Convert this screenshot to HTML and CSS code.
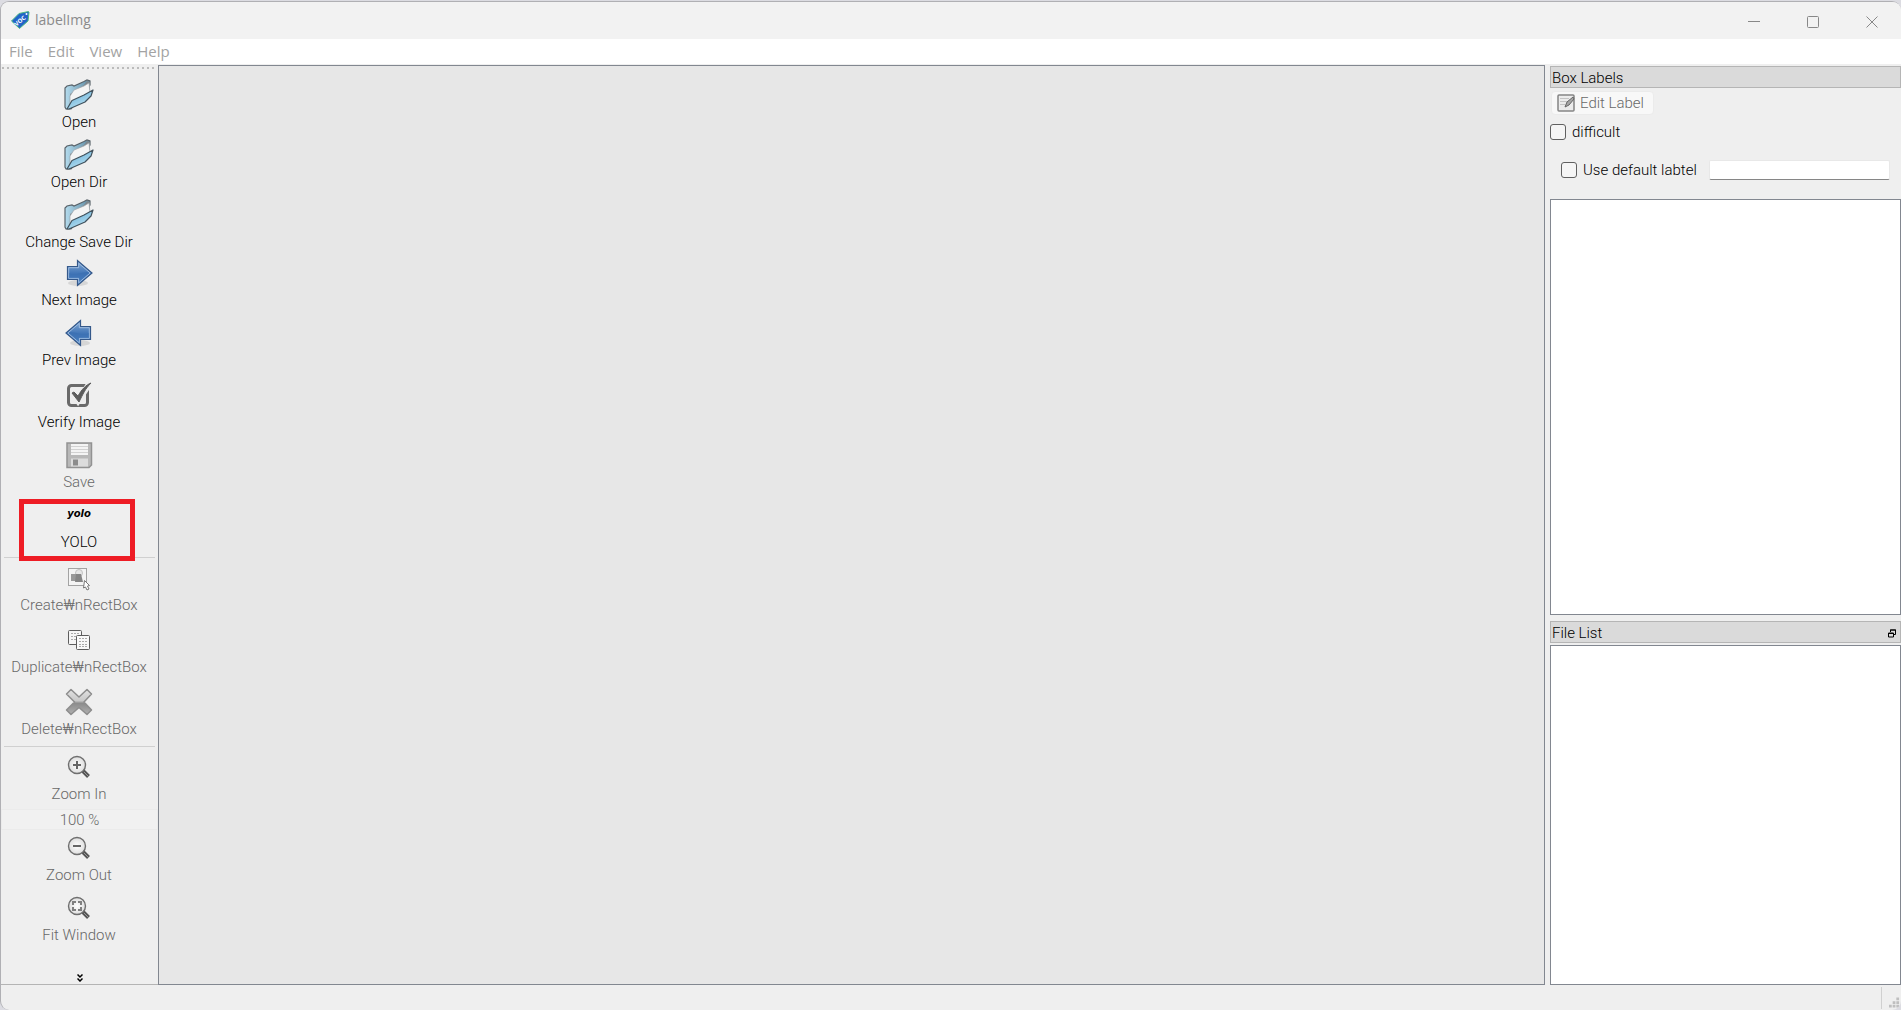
FILE: index.html
```html
<!DOCTYPE html>
<html lang="en">
<head>
    <meta charset="UTF-8">
    <meta name="viewport" content="width=device-width, initial-scale=1.0">
    <title>labelImg</title>
    <link rel="stylesheet" href="styles.css">
</head>
<body>
    <!-- shared icons -->
    <svg class="defs" width="0" height="0" aria-hidden="true">
        <defs>
            <linearGradient id="folderBlue" x1="0" y1="0" x2="0.6" y2="1">
                <stop offset="0" stop-color="#d3ecf8"/>
                <stop offset="0.5" stop-color="#8ac4e2"/>
                <stop offset="1" stop-color="#b9e2f4"/>
            </linearGradient>
            <linearGradient id="folderBack" x1="0" y1="0" x2="1" y2="0">
                <stop offset="0" stop-color="#b5dcee"/>
                <stop offset="1" stop-color="#5e8ba3"/>
            </linearGradient>
            <linearGradient id="arrowBlue" x1="0" y1="0" x2="0" y2="1">
                <stop offset="0" stop-color="#86abd6"/>
                <stop offset="0.5" stop-color="#4377b8"/>
                <stop offset="1" stop-color="#5b92d0"/>
            </linearGradient>
            <linearGradient id="crossGrey" x1="0" y1="0" x2="0" y2="1">
                <stop offset="0" stop-color="#e2e2e2"/>
                <stop offset="0.45" stop-color="#c8c8c8"/>
                <stop offset="0.55" stop-color="#8c8c8c"/>
                <stop offset="1" stop-color="#b0b0b0"/>
            </linearGradient>
            <radialGradient id="lens">
                <stop offset="0" stop-color="#ffffff"/>
                <stop offset="1" stop-color="#dedede"/>
            </radialGradient>
            <symbol id="folder" viewBox="0 0 32 32">
                <path d="M2 28V9l2-2 5-1 2 1 10-4.500 3-1.500 3 1v4L8 30H3z" fill="url(#folderBack)" stroke="#59636a" stroke-width="1.200"/>
                <path d="M7 15 21 6l3-4 3 1v8L8 24z" fill="#7d868c"/>
                <path d="M7 17 11 11l10-4 5-3 1 10L7 25z" fill="#f4f4f4" stroke="#9da5aa" stroke-width="0.700"/>
                <path d="M4 30 9 21.500l12-5.500 9-5-2 6-6 6-16 7z" fill="url(#folderBlue)" stroke="#41525d" stroke-width="1.200" stroke-linejoin="round"/>
            </symbol>
            <symbol id="arrow" viewBox="0 0 32 32">
                <ellipse cx="15" cy="26" rx="10" ry="3" fill="#d6d6d6"/>
                <path d="M4.500 9.500h10v-6L29 16 14.500 28.500v-6h-10z" fill="url(#arrowBlue)" stroke="#34588a" stroke-width="1.200"/>
                <path d="M5.700 10.700h10V6.300L27.200 16 15.700 25.700v-4.400h-10z" fill="none" stroke="#a5c1e2" stroke-width="0.900"/>
                <path d="M6 16c5 2 9 0 19-1l1 1-10 9v-4H6z" fill="#3469ad" opacity="0.450"/>
            </symbol>
            <symbol id="glass" viewBox="0 0 24 24">
                <path d="m15 15 6.500 6.500" stroke="#555" stroke-width="4"/>
                <path d="m17 17 4 4" stroke="#999" stroke-width="1"/>
                <circle cx="10" cy="10" r="8.500" fill="url(#lens)" stroke="#6f6f6f" stroke-width="1.400"/>
            </symbol>
        </defs>
    </svg>

    <div class="window">
        <header class="title-bar">
            <svg class="logo" viewBox="0 0 20 20" aria-hidden="true">
                <path d="M1.500 11 9 3.500 18.500 1.500l.500 1-1 8.500-8.500 7.500z" fill="#2265c8" stroke="#4fba82"/>
                <circle cx="16.500" cy="4" r="1" fill="#fff"/>
                <text class="logo-text" x="10" y="13" text-anchor="middle" transform="rotate(-40 10 11)">VOC</text>
            </svg>
            <h1>labelImg</h1>
            <div class="window-buttons">
                <button type="button" aria-label="Minimize">
                    <svg viewBox="0 0 12 12"><path d="M0 5.500h12"/></svg>
                </button>
                <button type="button" aria-label="Maximize">
                    <svg viewBox="0 0 12 12"><rect x="0.500" y="0.500" width="11" height="11" rx="1"/></svg>
                </button>
                <button type="button" aria-label="Close">
                    <svg viewBox="0 0 12 12"><path d="m.500.500 11 11m0-11-11 11"/></svg>
                </button>
            </div>
        </header>

        <nav class="menu-bar">
            <a href="#">File</a>
            <a href="#">Edit</a>
            <a href="#">View</a>
            <a href="#">Help</a>
        </nav>

        <main class="workspace">
            <div class="toolbar">
                <div class="handle"></div>
                <div class="tools">
                    <button type="button" class="tool"><svg class="icon"><use href="#folder"/></svg>Open</button>
                    <button type="button" class="tool"><svg class="icon"><use href="#folder"/></svg>Open Dir</button>
                    <button type="button" class="tool"><svg class="icon"><use href="#folder"/></svg>Change Save Dir</button>
                </div>
                <div class="tools nav">
                    <button type="button" class="tool"><svg class="icon"><use href="#arrow"/></svg>Next Image</button>
                    <button type="button" class="tool"><svg class="icon flip"><use href="#arrow"/></svg>Prev Image</button>
                </div>
                <div class="tools">
                    <button type="button" class="tool">
                        <svg class="icon" viewBox="0 0 32 32">
                            <rect x="5.500" y="6.500" width="19" height="20" rx="3" fill="#ededed" stroke="#6a6a6a" stroke-width="3"/>
                            <path d="m10 15 5 7L27 4" fill="none" stroke="#ededed" stroke-width="6"/>
                            <path d="m9 14 2-1 4 4C19 10 23 6 28 4c-6 6-8 11-12 19z" fill="#5c5c5c" stroke="#5c5c5c"/>
                        </svg>
                        Verify Image
                    </button>
                    <button type="button" class="tool" disabled>
                        <svg class="icon" viewBox="0 0 32 32">
                            <path d="M4 4h24.500v22l-2.500 2.500H4z" fill="#b8b8b8" stroke="#929292" stroke-width="1.500"/>
                            <path d="M8 5h17v11H8z" fill="#f4f4f4"/>
                            <path d="M8 7.500h17M8 10.500h17M8 13.500h17" stroke="#d2d2d2"/>
                            <path d="M8 19.500h17v8H8z" fill="#dcdcdc"/>
                            <path d="M10 20.500h5v6h-5z" fill="#8c8c8c"/>
                        </svg>
                        Save
                    </button>
                    <button type="button" class="tool marked"><span class="icon format">yolo</span>YOLO</button>
                </div>
                <div class="tools spaced">
                    <button type="button" class="tool" disabled>
                        <svg class="icon" viewBox="0 0 32 32">
                            <rect x="5.500" y="6.500" width="18" height="17" fill="#f4f4f4" stroke="#555" stroke-dasharray="1 1"/>
                            <circle cx="16" cy="11" r="3.500" fill="#e6e6e6" stroke="#c2c2c2"/>
                            <path d="M8 12h7v7H8z" fill="#999"/>
                            <path d="M13 12h5l2 8h-8z" fill="#858585"/>
                            <path d="m21.500 18.500 5 5-2 .500 1.500 3-2 1-1.500-3-2 1z" fill="#fff" stroke="#777"/>
                        </svg>
                        Create₩nRectBox
                    </button>
                    <button type="button" class="tool" disabled>
                        <svg class="icon" viewBox="0 0 32 32">
                            <rect x="5.500" y="6.500" width="13" height="14" rx="1" fill="#f5f5f5" stroke="#5d5d5d"/>
                            <path d="M8 9.500h8M8 12.500h8M8 15.500h8" stroke="#aaa" stroke-dasharray="2 1"/>
                            <rect x="13.500" y="11.500" width="13" height="14" rx="1" fill="#f9f9f9" stroke="#5d5d5d"/>
                            <path d="M16 14.500h8M16 17.500h8M16 20.500h8M16 22.500h8" stroke="#aaa" stroke-dasharray="2 1"/>
                        </svg>
                        Duplicate₩nRectBox
                    </button>
                    <button type="button" class="tool" disabled>
                        <svg class="icon" viewBox="0 0 32 32">
                            <path d="m8 3.500 8 7.500 8-7.500 4.500 4.500-7.500 8 7.500 8-4.500 4.500-8-7-8 7L3.500 24l8-8-8-8z" fill="url(#crossGrey)" stroke="#8d8d8d" stroke-width="1.500" stroke-linejoin="round"/>
                        </svg>
                        Delete₩nRectBox
                    </button>
                </div>
                <div class="tools zoom">
                    <button type="button" class="tool" disabled>
                        <svg class="icon small" viewBox="0 0 24 24"><use href="#glass"/><path d="M6 10h8M10 6v8" stroke="#666" stroke-width="2"/></svg>
                        Zoom In
                    </button>
                    <input class="zoom-value" type="text" value="100 %" aria-label="Zoom level" disabled>
                    <button type="button" class="tool" disabled>
                        <svg class="icon small" viewBox="0 0 24 24"><use href="#glass"/><path d="M6 10h8" stroke="#666" stroke-width="2"/></svg>
                        Zoom Out
                    </button>
                    <button type="button" class="tool" disabled>
                        <svg class="icon small" viewBox="0 0 24 24"><use href="#glass"/><path d="M6 9V6h3m2 0h3v3m0 2v3h-3m-2 0H6v-3" fill="none" stroke="#808080" stroke-width="2"/></svg>
                        Fit Window
                    </button>
                </div>
                <button type="button" class="more" aria-label="More tools">
                    <svg viewBox="0 0 6 8"><path d="m.500.500 2.500 2.500L5.500.500m-5 4L3 7l2.500-2.500"/></svg>
                </button>
            </div>

            <section class="canvas" aria-label="Image canvas"></section>

            <aside class="docks">
                <section class="dock labels">
                    <h2 class="dock-title">Box Labels</h2>
                    <button type="button" class="edit-label" disabled>
                        <svg viewBox="0 0 18 18">
                            <rect x="1" y="1" width="16" height="16" rx="1" fill="#ececec" stroke="#858585" stroke-width="1.500"/>
                            <path d="M3 4.500h9M3 7.500h7M3 10.500h5" stroke="#c4c4c4"/>
                            <path d="m8 13 2-5 6-5 1 2-5 6z" fill="#a5a5a5" stroke="#666"/>
                        </svg>
                        Edit Label
                    </button>
                    <label class="check"><input type="checkbox">difficult</label>
                    <div class="default-label">
                        <label class="check"><input type="checkbox">Use default labtel</label>
                        <input class="label-name" type="text" aria-label="Default label">
                    </div>
                    <div class="list"></div>
                </section>
                <section class="dock files">
                    <h2 class="dock-title">File List
                        <button type="button" class="float" aria-label="Float">
                            <svg viewBox="0 0 8 9"><path d="M2.500 3V1h5v4.500H6M2 1h6M.500 4h5v4h-5zM0 4.500h6"/></svg>
                        </button>
                    </h2>
                    <div class="list"></div>
                </section>
            </aside>
        </main>

        <footer class="status-bar">
            <svg class="grip" viewBox="0 0 12 12"><path d="M8 0h3v3H8zM4 4h3v3H4zM8 4h3v3H8zM0 8h3v3H0zM4 8h3v3H4zM8 8h3v3H8z"/></svg>
        </footer>
    </div>
</body>
</html>
```
FILE: styles.css
```css
* {
    box-sizing: border-box;
}
body {
    margin: 0;
    height: 100vh;
    padding-top: 1px;
    background-color: #dcdce2;
    font-family: Roboto, "Liberation Sans", Arial, sans-serif;
    font-size: 15px;
    font-weight: 300;
    line-height: 20px;
    color: #000;
}
h1, h2 {
    margin: 0;
    font-size: 15px;
    font-weight: inherit;
}
button {
    border: none;
    padding: 0;
    background: none;
    font: inherit;
    color: inherit;
}
button:disabled {
    color: #686868;
}
.defs {
    position: absolute;
}
.window {
    display: flex;
    flex-direction: column;
    height: 100%;
    background-color: #efefef;
    border: 1px solid #b0b0b4;
    border-width: 1px 0 0 1px;
    border-radius: 9px;
    overflow: hidden;
}

/* title bar and menu */
.title-bar {
    display: flex;
    align-items: center;
    height: 37px;
    padding: 0 0 1px 9px;
    gap: 5px;
    background-color: #f2f2f2;
    font-family: "Open Sans", "Noto Sans", sans-serif;
    font-weight: 400;
    color: #8b8b8b;
}
.title-bar h1 {
    font-size: 14px;
}
.logo {
    width: 20px;
    height: 20px;
}
.logo-text {
    fill: #fff;
    font-size: 6px;
    font-weight: bold;
}
.window-buttons {
    display: flex;
    margin-left: auto;
}
.window-buttons button {
    width: 59px;
    height: 35px;
}
.window-buttons svg {
    width: 12px;
    height: 12px;
    fill: none;
    stroke: #888;
    vertical-align: middle;
}
.menu-bar {
    display: flex;
    align-items: center;
    gap: 15px;
    height: 25px;
    padding: 0 0 2px 8px;
    background-color: #fff;
    font-family: "Open Sans", "Noto Sans", sans-serif;
    font-weight: 400;
}
.menu-bar a {
    color: #a3a3a3;
    text-decoration: none;
}

/* main area */
.workspace {
    display: flex;
    flex: 1;
    min-height: 0;
    padding-top: 1px;
}
.toolbar {
    display: flex;
    flex-direction: column;
    width: 157px;
    border-bottom: 1px solid #b4b4b4;
}
.handle {
    height: 2px;
    margin: 2px 1px 8px;
    background: repeating-linear-gradient(90deg, #bbb 0 2px, transparent 2px 5px);
}
.tools {
    display: flex;
    flex-direction: column;
}
.tools.nav {
    margin: -2px 0 2px;
}
.tools.spaced {
    gap: 2px;
    padding-bottom: 2px;
}
.tools.spaced::before,
.tools.zoom::before {
    content: "";
    height: 1px;
    margin: 0 3px;
    background-color: #d0d0d0;
}
.tools.zoom::before {
    margin-bottom: 2px;
}
.tool {
    position: relative;
    display: flex;
    flex-direction: column;
    align-items: center;
    gap: 1px;
    height: 60px;
    padding: 2px 1px 0 0;
    white-space: nowrap;
}
.icon {
    flex: none;
    width: 32px;
    height: 32px;
}
.icon.small {
    width: 24px;
    height: 24px;
    margin: 4px;
}
.icon.flip {
    transform: scaleX(-1);
}
.icon.format {
    font: italic bold 10px/30px "DejaVu Sans", sans-serif;
    text-align: center;
}
.marked::after {
    content: "";
    position: absolute;
    top: 2px;
    right: 23px;
    bottom: -4px;
    left: 18px;
    z-index: 1;
    border: 5px solid #ee1c25;
}
.zoom-value {
    height: 21px;
    padding: 0;
    border: 1px solid #ebebeb;
    background-color: #f1f1f1;
    font: inherit;
    text-align: center;
    color: #686868;
}
.more {
    margin-top: auto;
    height: 14px;
    line-height: 10px;
}
.more svg {
    width: 6px;
    height: 8px;
    fill: none;
    stroke: #000;
    stroke-width: 1.5;
}
.canvas {
    flex: 1;
    background-color: #e7e7e7;
    border: 1px solid #828790;
}

/* docks */
.docks {
    display: flex;
    flex-direction: column;
    gap: 6px;
    width: 356px;
    padding: 1px 0 0 5px;
}
.dock {
    display: flex;
    flex-direction: column;
    align-items: flex-start;
}
.dock.labels {
    flex: 549;
}
.dock.files {
    flex: 364;
    gap: 2px;
}
.dock-title {
    display: flex;
    align-items: center;
    justify-content: space-between;
    width: 100%;
    height: 22px;
    padding: 2px 4px 0 1px;
    background-color: #dadada;
    border: 1px solid #b5b5b5;
}
.float {
    display: flex;
}
.float svg {
    width: 8px;
    height: 9px;
    fill: none;
    stroke: #000;
}
.edit-label {
    display: flex;
    align-items: center;
    gap: 5px;
    height: 24px;
    margin: 3px 1px 0;
    padding: 0 9px 0 5px;
    background-color: #f8f8f8;
    border: 1px solid #ebebeb;
    border-radius: 4px;
}
.edit-label svg {
    width: 18px;
    height: 18px;
}
.check {
    display: flex;
    align-items: center;
    gap: 6px;
    white-space: nowrap;
}
.dock > .check {
    margin-top: 7px;
}
.check input {
    appearance: none;
    width: 16px;
    height: 16px;
    margin: 0;
    background-color: #f5f5f5;
    border: 1px solid #606060;
    border-radius: 3px;
}
.default-label {
    display: flex;
    align-items: center;
    gap: 12px;
    width: 100%;
    padding: 18px 11px 19px;
}
.label-name {
    flex: 1;
    min-width: 0;
    height: 20px;
    padding: 0 4px;
    border: 1px solid #e8e8e8;
    border-bottom-color: #868686;
    border-radius: 2px;
    background-color: #fff;
    font: inherit;
}
.list {
    flex: 1;
    width: 100%;
    background-color: #fff;
    border: 1px solid #828790;
}

/* status bar */
.status-bar {
    display: flex;
    justify-content: flex-end;
    height: 25px;
    padding: 2px 1px 1px 0;
}
.grip {
    width: 19px;
    padding: 10px 0 0 7px;
    border-left: 1px solid #d0d0d0;
    fill: #bfbfbf;
}
```
